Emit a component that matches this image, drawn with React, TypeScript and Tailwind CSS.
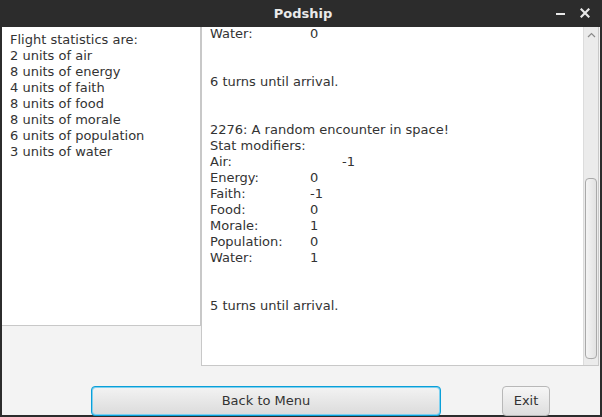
import React from "react";

const font = { fontFamily: '"DejaVu Sans", "Liberation Sans", sans-serif' };

function Row({ label, value, air }: { label: string; value: string; air?: boolean }) {
  return (
    <div className="flex h-[16px] items-center">
      <span className={air ? "w-[132px]" : "w-[100px]"}>{label}</span>
      <span>{value}</span>
    </div>
  );
}

function Line({ children }: { children?: React.ReactNode }) {
  return <div className="flex h-[16px] items-center whitespace-nowrap">{children}</div>;
}

export default function App() {
  const left = [
    "Flight statistics are:",
    "2 units of air",
    "8 units of energy",
    "4 units of faith",
    "8 units of food",
    "8 units of morale",
    "6 units of population",
    "3 units of water",
  ];
  return (
    <div className="w-[602px] h-[417px] bg-[#2c2c2c] flex flex-col overflow-hidden" style={font}>
      <div className="h-[27px] relative flex items-center justify-center shrink-0">
        <span className="text-[13px] font-bold text-[#eaeaea] ml-[4px]">Podship</span>
        <div className="absolute left-[556px] top-[13px] w-[9px] h-[2px] bg-[#e8e8e8]" />
        <svg className="absolute left-[580px] top-[8px]" width="10" height="10" viewBox="0 0 10 10">
          <path d="M1.5 1.5 L8.5 8.5 M8.5 1.5 L1.5 8.5" stroke="#e8e8e8" strokeWidth="2.2" strokeLinecap="square" />
        </svg>
      </div>
      <div className="mx-[2px] h-[388px] bg-[#f3f3f3] flex flex-col text-[#333] text-[13px]">
        <div className="flex items-start">
          <div className="w-[199px] h-[299px] bg-white border-r border-b border-[#c8c8c8] pl-[8px] pt-[5px]">
            {left.map((t) => (
              <Line key={t}>{t}</Line>
            ))}
          </div>
          <div className="w-[398px] h-[339px] bg-white border-l border-r border-b border-[#c8c8c8] flex overflow-hidden">
            <div className="flex-1 pl-[8px] mt-[-1px]">
              <Row label="Water:" value="0" />
              <Line />
              <Line />
              <Line>6 turns until arrival.</Line>
              <Line />
              <Line />
              <Line>2276: A random encounter in space!</Line>
              <Line>Stat modifiers:</Line>
              <Row label="Air:" value="-1" air />
              <Row label="Energy:" value="0" />
              <Row label="Faith:" value="-1" />
              <Row label="Food:" value="0" />
              <Row label="Morale:" value="1" />
              <Row label="Population:" value="0" />
              <Row label="Water:" value="1" />
              <Line />
              <Line />
              <Line>5 turns until arrival.</Line>
            </div>
            <div className="w-[15px] h-full bg-[#ebebeb] border-l border-[#dcdcdc] flex flex-col items-center">
              <div className="h-[16px] flex items-center justify-center">
                <svg width="9" height="6" viewBox="0 0 9 6">
                  <path d="M1 5 L4.5 1.5 L8 5" stroke="#8a8a8a" strokeWidth="1.2" fill="none" />
                </svg>
              </div>
              <div className="flex-1 w-full relative">
                <div className="absolute left-[1px] right-[1px] top-[135px] h-[181px] rounded-[4px] border border-[#a9a9a9] bg-gradient-to-r from-[#f4f4f4] to-[#e2e2e2]" />
              </div>
              <div className="h-[16px] flex items-center justify-center">
                <svg width="9" height="6" viewBox="0 0 9 6">
                  <path d="M1 1 L4.5 4.5 L8 1" stroke="#8a8a8a" strokeWidth="1.2" fill="none" />
                </svg>
              </div>
            </div>
          </div>
        </div>
        <div className="flex pl-[89px] mt-[20px]">
          <div className="w-[350px] h-[30px] rounded-[4px] border border-[#0a9fd8] p-[1px] bg-[#7fd0ef]">
            <div className="w-full h-full rounded-[3px] bg-gradient-to-b from-[#f2f2f2] to-[#dcdcdc] flex items-center justify-center">
              Back to Menu
            </div>
          </div>
          <div className="ml-[61px] w-[48px] h-[30px] rounded-[4px] border border-[#b8b8b8] bg-gradient-to-b from-[#f6f6f6] to-[#dedede] flex items-center justify-center">
            Exit
          </div>
        </div>
      </div>
    </div>
  );
}
